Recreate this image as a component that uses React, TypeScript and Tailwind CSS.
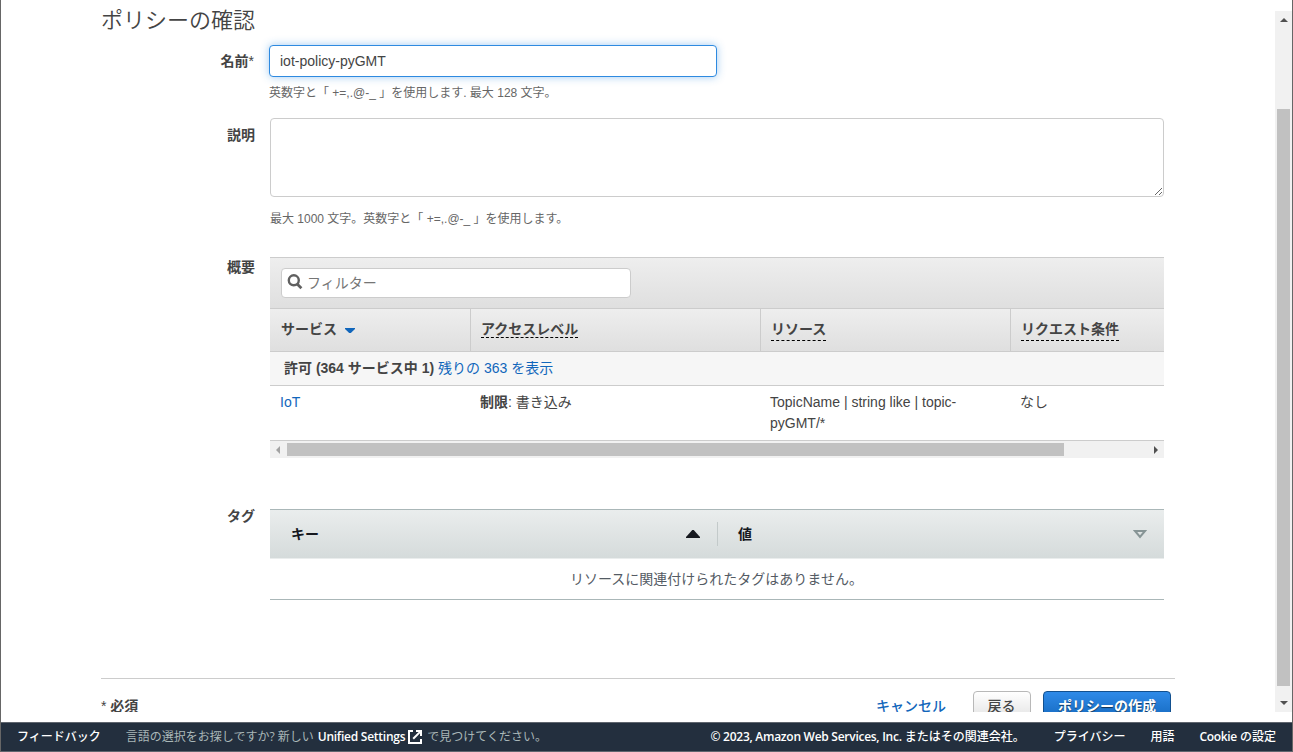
import clsx from "clsx";
import type { ReactNode } from "react";

const columns = [
  { label: "サービス", width: "w-[200px]", sorted: true },
  { label: "アクセスレベル", width: "w-[290px]", underline: "pb-0" },
  { label: "リソース", width: "w-[250px]", underline: "pb-[3px]" },
  { label: "リクエスト条件", width: "flex-1", underline: "pb-[3px]" },
];

const Field = ({
  label,
  required,
  className,
  labelClassName,
  children,
}: {
  label: string;
  required?: boolean;
  className?: string;
  labelClassName?: string;
  children: ReactNode;
}) => (
  <div className={clsx("grid grid-cols-[154px_894px] gap-x-[15px]", className)}>
    <div
      className={clsx(
        "text-right text-sm leading-5 font-bold whitespace-nowrap",
        labelClassName
      )}
    >
      {label}
      {required && <span className="font-normal">*</span>}
    </div>
    <div>{children}</div>
  </div>
);

const SearchIcon = () => (
  <svg width="16" height="16" viewBox="0 0 16 16" fill="none" stroke="#606060">
    <circle cx="6.8" cy="6.3" r="5" strokeWidth="2.4" />
    <path d="M10.4 10.2 14.4 14.2" strokeWidth="2.8" />
  </svg>
);

const ExternalIcon = () => (
  <svg width="14" height="14" viewBox="0 0 14 14" fill="none" stroke="#fff" strokeWidth="2">
    <path d="M5 1H1v12h12V9" />
    <path d="M8 1h5v5" />
    <path d="M12.6 1.4 5.2 8.8" />
  </svg>
);

const SummaryTable = () => (
  <div className="border-t border-[#ccc]">
    <div className="h-[50px] bg-linear-to-b from-[#eee] to-[#dfdfdf] pt-[10px] pl-[11px]">
      <div className="flex h-[30px] w-[350px] items-center rounded border border-[#ccc] bg-white pl-[5px]">
        <div className="-mt-[3px]">
          <SearchIcon />
        </div>
        <span className="ml-1 text-sm leading-5 text-[#757575]">フィルター</span>
      </div>
    </div>
    <div className="flex h-11 border-y border-[#ccc] bg-linear-to-b from-[#eee] to-[#dfdfdf]">
      {columns.map((col, i) => (
        <div
          key={col.label}
          className={clsx(
            "flex items-start pt-[12px] text-sm leading-4 font-bold",
            col.width,
            i === 0 ? "pl-[11px]" : "border-l border-[#ccc] pl-[10px]"
          )}
        >
          <span
            className={clsx(
              col.underline && "border-b border-dashed border-black",
              col.underline
            )}
          >
            {col.label}
          </span>
          {col.sorted && (
            <svg className="mt-[7px] ml-2" width="10" height="5" viewBox="0 0 10 5">
              <path d="M0 0h10v1L5.8 5H4.2L0 1z" fill="#1166bb" />
            </svg>
          )}
        </div>
      ))}
    </div>
    <div className="h-[34px] border-b border-[#ccc] bg-[#f6f6f6] pt-[6px] pl-[14px] text-sm leading-5">
      <span className="font-bold">許可 (364 サービス中 1)</span>{" "}
      <a className="text-[#1166bb]">残りの 363 を表示</a>
    </div>
    <div className="flex h-[55px] border-b border-[#ccc] pt-[6px] text-sm leading-[21px]">
      <div className="w-[200px] pl-[10px] text-[#1166bb]">IoT</div>
      <div className="w-[290px] pl-[10px]">
        <b>制限</b>: 書き込み
      </div>
      <div className="w-[250px] pr-10 pl-[10px]">TopicName | string like | topic-pyGMT/*</div>
      <div className="pl-[10px]">なし</div>
    </div>
    <div className="flex h-[17px] items-center bg-[#f1f1f1]">
      <svg className="mr-[7px] ml-[6px]" width="4" height="8" viewBox="0 0 4 8">
        <path d="M4 0v8L0 4z" fill="#a3a3a3" />
      </svg>
      <div className="h-[13px] w-[777px] bg-[#c1c1c1]" />
      <svg className="mr-[6px] ml-auto" width="4" height="8" viewBox="0 0 4 8">
        <path d="M0 0v8l4-4z" fill="#505050" />
      </svg>
    </div>
  </div>
);

const TagTable = () => (
  <div className="border-b border-[#aab7b8] text-sm leading-5">
    <div className="flex h-[50px] items-center border-t border-b border-t-[#aab7b8] border-b-[#eaeded] bg-linear-to-b from-[#eaeded] to-[#d5dbdb] font-bold text-[#16191f]">
      <div className="flex h-6 w-[448px] items-center justify-between border-r border-[#c3caca] pr-[17px] pl-[21px]">
        <span>キー</span>
        <svg width="14" height="8" viewBox="0 0 14 8">
          <path d="M6.3 0h1.4L14 7v1H0V7z" fill="#16191f" />
        </svg>
      </div>
      <div className="flex flex-1 items-center justify-between pr-[17px] pl-5">
        <span>値</span>
        <svg width="14" height="9" viewBox="0 0 14 9">
          <path d="M2 1h10L7 7z" fill="none" stroke="#879596" strokeWidth="2" />
        </svg>
      </div>
    </div>
    <div className="h-10 pt-[10px] pr-px text-center text-[#545b64]">
      リソースに関連付けられたタグはありません。
    </div>
  </div>
);

const App = () => (
  <div className="flex h-[752px] w-[1293px] flex-col overflow-hidden border-x border-x-[#666] bg-white font-['Liberation_Sans','Noto_Sans_CJK_JP',sans-serif] text-[#444]">
    <div className="flex h-[712px] justify-between overflow-hidden">
      <main className="ml-[100px] w-[1074px] shrink-0">
        <h1 className="pt-[5px] text-[22px] leading-8 font-[350]">ポリシーの確認</h1>

        <Field label="名前" required className="mt-2" labelClassName="pt-[6px] pr-px">
          <div className="-ml-px h-8 w-[448px] rounded border border-[#2e8ae0] bg-white pl-[10px] text-sm leading-[31px] shadow-[0_0_8px_rgba(46,138,224,0.45)]">
            iot-policy-pyGMT
          </div>
          <p className="-ml-px pt-[7px] text-xs leading-[18px] text-[#666]">
            英数字と「 +=,.@-_ 」を使用します. 最大 128 文字。
          </p>
        </Field>

        <Field label="説明" className="mt-4" labelClassName="pt-[7px]">
          <textarea className="block h-[79px] w-full resize rounded border border-[#ccc] bg-white" />
          <p className="pt-[13px] text-xs leading-[18px] text-[#666]">
            最大 1000 文字。英数字と「 +=,.@-_ 」を使用します。
          </p>
        </Field>

        <Field label="概要" className="mt-[29px]">
          <SummaryTable />
        </Field>

        <Field label="タグ" className="mt-[51px]" labelClassName="-mt-[3px]">
          <TagTable />
        </Field>

        <div className="mt-[78px] flex h-20 items-start border-t border-[#ccc] pt-3 text-sm">
          <span className="pt-[5px] leading-5">
            * <b>必須</b>
          </span>
          <a className="mr-[27px] ml-auto pt-[5px] leading-5 font-medium text-[#1166bb]">
            キャンセル
          </a>
          <button className="h-8 w-[58px] rounded border border-[#b8b8b8] bg-linear-to-b from-white to-[#e0e0e0] pr-px pb-[2px] font-medium">
            戻る
          </button>
          <button className="mr-1 ml-3 h-8 w-32 rounded border border-[#12508f] bg-linear-to-b from-[#2e8ae8] to-[#1166bb] pb-[2px] font-bold text-white text-shadow-[0_1px_1px_rgba(0,0,0,0.6)]">
            ポリシーの作成
          </button>
        </div>
      </main>

      <div className="mt-[11px] flex w-[17px] flex-col items-center bg-[#f1f1f1]">
        <svg className="mt-[7px]" width="8" height="4" viewBox="0 0 8 4">
          <path d="M0 4h8L4 0z" fill="#505050" />
        </svg>
        <div className="mt-[87px] h-[577px] w-[13px] bg-[#c1c1c1]" />
        <svg className="mt-[15px]" width="8" height="4" viewBox="0 0 8 4">
          <path d="M0 0h8L4 4z" fill="#505050" />
        </svg>
      </div>
    </div>

    <footer className="mt-[10px] flex h-[30px] items-center border-t border-b border-[#5f656e] bg-[#232f3e] pr-4 pl-4 font-['Open_Sans','Noto_Sans_CJK_JP',sans-serif] text-xs leading-5 font-medium whitespace-nowrap text-white">
      <span>フィードバック</span>
      <span className="ml-[25px] flex items-center font-normal text-[#aab7b8]">
        言語の選択をお探しですか? 新しい
        <b className="mr-[3px] ml-1 font-semibold tracking-[-0.25px] text-white">
          Unified Settings
        </b>
        <ExternalIcon />
        <span className="ml-[5px]">で見つけてください。</span>
      </span>
      <span className="ml-auto">
        <span className="font-semibold tracking-[-0.27px]">
          © 2023, Amazon Web Services, Inc.
        </span>{" "}
        またはその関連会社。
      </span>
      <a className="ml-[29px]">プライバシー</a>
      <a className="ml-[25px]">用語</a>
      <a className="ml-[25px]">
        <span className="font-semibold tracking-[-0.35px]">Cookie</span> の設定
      </a>
    </footer>
  </div>
);

export default App;
